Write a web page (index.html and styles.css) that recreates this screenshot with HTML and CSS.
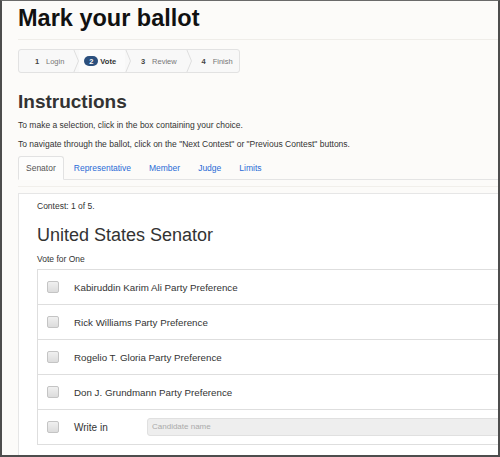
FILE: index.html
```html
<!DOCTYPE html>
<html>
<head>
<meta charset="utf-8">
<link rel="stylesheet" href="styles.css">
</head>
<body>
<div class="frame">
  <div class="page">
    <header class="header"><h1 class="title">Mark your ballot</h1></header>
    <ol class="steps">
      <li class="step first"><span class="num">1</span><span class="lbl">Login</span></li>
      <li class="sep"><svg width="6" height="24" viewBox="0 0 6 24"><polyline points="0.5,0 5.5,12 0.5,24" fill="none" stroke="#dedede" stroke-width="1"/></svg></li>
      <li class="step current"><span class="num">2</span><span class="lbl">Vote</span></li>
      <li class="sep"><svg width="6" height="24" viewBox="0 0 6 24"><polyline points="0.5,0 5.5,12 0.5,24" fill="none" stroke="#dedede" stroke-width="1"/></svg></li>
      <li class="step"><span class="num">3</span><span class="lbl">Review</span></li>
      <li class="sep"><svg width="6" height="24" viewBox="0 0 6 24"><polyline points="0.5,0 5.5,12 0.5,24" fill="none" stroke="#dedede" stroke-width="1"/></svg></li>
      <li class="step last"><span class="num">4</span><span class="lbl">Finish</span></li>
    </ol>
    <h2 class="instr">Instructions</h2>
    <p class="p1">To make a selection, click in the box containing your choice.</p>
    <p class="p2">To navigate through the ballot, click on the "Next Contest" or "Previous Contest" buttons.</p>
    <ul class="tabs">
      <li class="tab active">Senator</li>
      <li class="tab">Representative</li>
      <li class="tab">Member</li>
      <li class="tab">Judge</li>
      <li class="tab">Limits</li>
    </ul>
    <div class="tabcontent">
      <div class="panel">
        <div class="contest">Contest: 1 of 5.</div>
        <h3 class="office">United States Senator</h3>
        <div class="votefor">Vote for One</div>
        <ul class="cands">
          <li class="cand"><span class="box"></span><span class="name">Kabiruddin Karim Ali Party Preference</span></li>
          <li class="cand"><span class="box"></span><span class="name">Rick Williams Party Preference</span></li>
          <li class="cand"><span class="box"></span><span class="name">Rogelio T. Gloria Party Preference</span></li>
          <li class="cand"><span class="box"></span><span class="name">Don J. Grundmann Party Preference</span></li>
          <li class="cand write"><span class="box"></span><span class="name wname">Write in</span><span class="wi">Candidate name</span></li>
        </ul>
      </div>
    </div>
  </div>
</div>
</body>
</html>
```

FILE: styles.css
```css
* { box-sizing: border-box; }
html, body { margin: 0; padding: 0; background: #fff; }
body { font-family: "Liberation Sans", Arial, sans-serif; }

.frame {
  width: 500px;
  height: 457px;
  border: 2px solid #4d4d4d;
  border-top: 1px solid #6a6a6a;
  background: #fcfbf9;
  overflow: hidden;
}
.page {
  width: 700px;
  padding-left: 16px;
}

.header {
  padding-top: 2px;
  padding-bottom: 6px;
  border-bottom: 1px solid #efede9;
}
.title {
  margin: 0;
  font-size: 23.5px;
  line-height: 30px;
  font-weight: bold;
  color: #111;
}

.steps {
  list-style: none;
  margin: 9px 0 0 0;
  padding: 0;
  display: flex;
  width: 222px;
  height: 24px;
  border: 1px solid #e2e2e2;
  border-radius: 3px;
  background: #f8f8f8;
  overflow: hidden;
}
.step {
  display: flex;
  align-items: center;
  padding: 0 9px 0 5px;
  font-size: 7.5px;
  color: #777;
}
.step.first { padding-left: 11px; }
.step.current { background: #fbfbfb; padding-right: 9px; }
.sep { display: flex; align-items: stretch; margin-top: -1px; }
.sep svg { display: block; }
.num {
  display: inline-flex;
  align-items: center;
  justify-content: center;
  width: 14px;
  height: 10px;
  border-radius: 5px;
  font-weight: bold;
  color: #444;
  margin-right: 2px;
}
.current .num { background: #2b4f7d; color: #fff; }
.current .lbl { color: #333; font-weight: bold; }

.instr {
  margin: 18px 0 0 0;
  font-size: 19px;
  line-height: 22px;
  font-weight: bold;
  color: #333;
}
.p1, .p2 {
  margin: 0;
  font-size: 8.5px;
  line-height: 12px;
  color: #333;
}
.p1 { margin-top: 6px; }
.p2 { margin-top: 7px; }

.tabs {
  list-style: none;
  margin: 6px 0 0 0;
  padding: 0;
  display: flex;
  height: 24px;
  border-bottom: 1px solid #e4e4e4;
}
.tab {
  font-size: 8.5px;
  line-height: 22px;
  padding: 0 7px;
  margin-right: 2px;
  color: #2a6bd6;
  border: 1px solid transparent;
  border-radius: 3px 3px 0 0;
}
.tab.active {
  color: #555;
  background: #fdfdfc;
  border-color: #e2e2e2;
  border-bottom-color: #fdfdfc;
  height: 24px;
}

.tabcontent {
  padding-top: 6px;
}
.tabcontent::before {
  content: "";
  display: block;
  height: 1px;
  background: #f1efeb;
  margin-bottom: 6px;
}
.panel {
  background: #fff;
  border: 1px solid #e6e6e6;
  padding: 6px 0 20px 18px;
  height: 400px;
}
.contest {
  font-size: 8.5px;
  line-height: 12px;
  color: #333;
}
.office {
  margin: 11px 0 0 0;
  font-size: 18px;
  line-height: 24px;
  font-weight: normal;
  color: #333;
}
.votefor {
  margin-top: 6px;
  font-size: 8.5px;
  line-height: 12px;
  color: #333;
}
.cands {
  list-style: none;
  margin: 4px 0 0 0;
  padding: 0;
  border: 1px solid #dedede;
  border-bottom: none;
}
.cand {
  display: flex;
  align-items: center;
  height: 35px;
  border-bottom: 1px solid #dedede;
  padding-left: 9px;
}
.box {
  width: 12px;
  height: 12px;
  border: 1px solid #c4c4c4;
  border-radius: 2px;
  background: linear-gradient(#f0f0f0, #dcdcdc);
  flex: none;
}
.name {
  margin-left: 15px;
  font-size: 9.75px;
  color: #333;
}
.wname { width: 73px; font-size: 10px; }
.wi {
  flex: 1;
  height: 18px;
  margin-right: 10px;
  border: 1px solid #e0e0e0;
  border-radius: 3px;
  background: #eeeeee;
  font-size: 8px;
  line-height: 16px;
  padding-left: 4px;
  color: #aaa;
}
```
